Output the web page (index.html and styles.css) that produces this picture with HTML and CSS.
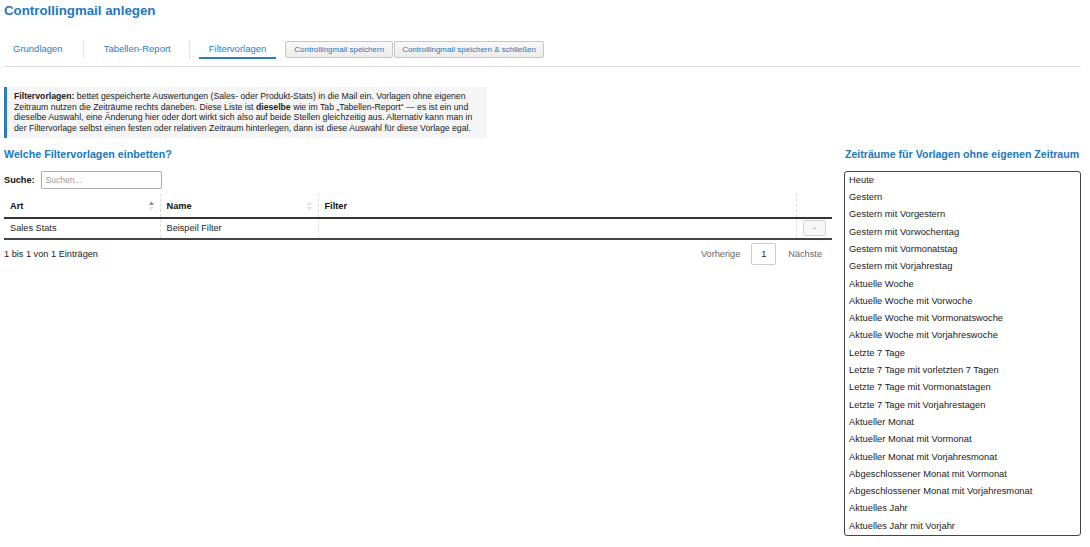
FILE: index.html
```html
<!DOCTYPE html>
<html lang="de">
<head>
<meta charset="utf-8">
<title>Controllingmail anlegen</title>
<link rel="stylesheet" href="styles.css">
</head>
<body>
<div class="page">
  <h1 class="title">Controllingmail anlegen</h1>

  <div class="tabbar">
    <a class="tab">Grundlagen</a>
    <span class="tabsep"></span>
    <a class="tab">Tabellen-Report</a>
    <span class="tabsep"></span>
    <a class="tab active">Filtervorlagen</a>
    <div class="actions">
      <button class="btn">Controllingmail speichern</button>
      <button class="btn">Controllingmail speichern &amp; schließen</button>
    </div>
  </div>
  <div class="rule"></div>

  <div class="info">
    <b>Filtervorlagen:</b> bettet gespeicherte Auswertungen (Sales- oder Produkt-Stats) in die Mail ein. Vorlagen ohne eigenen<br>
    Zeitraum nutzen die Zeiträume rechts daneben. Diese Liste ist <b>dieselbe</b> wie im Tab „Tabellen-Report“ — es ist ein und<br>
    dieselbe Auswahl, eine Änderung hier oder dort wirkt sich also auf beide Stellen gleichzeitig aus. Alternativ kann man in<br>
    der Filtervorlage selbst einen festen oder relativen Zeitraum hinterlegen, dann ist diese Auswahl für diese Vorlage egal.
  </div>

  <div class="columns">
    <section class="left">
      <h2 class="heading">Welche Filtervorlagen einbetten?</h2>
      <div class="search">
        <label>Suche:</label>
        <input type="text" placeholder="Suchen...">
      </div>
      <table class="grid">
        <thead>
          <tr>
            <th class="c-art">Art<svg class="sort" width="5" height="10" viewBox="0 0 5 10"><path d="M2.5 0.5 L5 4 L0 4 Z" fill="#8a8a8a"/><path d="M2.5 9.5 L5 6 L0 6 Z" fill="#e0e0e0"/></svg></th>
            <th class="c-name">Name<svg class="sort" width="5" height="10" viewBox="0 0 5 10"><path d="M2.5 0.5 L5 4 L0 4 Z" fill="#e0e0e0"/><path d="M2.5 9.5 L5 6 L0 6 Z" fill="#e0e0e0"/></svg></th>
            <th class="c-filter">Filter</th>
            <th class="c-act"></th>
          </tr>
        </thead>
        <tbody>
          <tr>
            <td>Sales Stats</td>
            <td>Beispeil Filter</td>
            <td></td>
            <td class="c-act"><span class="mini">+</span></td>
          </tr>
        </tbody>
      </table>
      <div class="tfoot">
        <span>1 bis 1 von 1 Einträgen</span>
        <div class="pager">
          <span class="pl">Vorherige</span>
          <span class="pnum">1</span>
          <span class="pl">Nächste</span>
        </div>
      </div>
    </section>

    <aside class="right">
      <h2 class="heading">Zeiträume für Vorlagen ohne eigenen Zeitraum</h2>
      <div class="listbox">
        <div class="opt">Heute</div>
        <div class="opt">Gestern</div>
        <div class="opt">Gestern mit Vorgestern</div>
        <div class="opt">Gestern mit Vorwochentag</div>
        <div class="opt">Gestern mit Vormonatstag</div>
        <div class="opt">Gestern mit Vorjahrestag</div>
        <div class="opt">Aktuelle Woche</div>
        <div class="opt">Aktuelle Woche mit Vorwoche</div>
        <div class="opt">Aktuelle Woche mit Vormonatswoche</div>
        <div class="opt">Aktuelle Woche mit Vorjahreswoche</div>
        <div class="opt">Letzte 7 Tage</div>
        <div class="opt">Letzte 7 Tage mit vorletzten 7 Tagen</div>
        <div class="opt">Letzte 7 Tage mit Vormonatstagen</div>
        <div class="opt">Letzte 7 Tage mit Vorjahrestagen</div>
        <div class="opt">Aktueller Monat</div>
        <div class="opt">Aktueller Monat mit Vormonat</div>
        <div class="opt">Aktueller Monat mit Vorjahresmonat</div>
        <div class="opt">Abgeschlossener Monat mit Vormonat</div>
        <div class="opt">Abgeschlossener Monat mit Vorjahresmonat</div>
        <div class="opt">Aktuelles Jahr</div>
        <div class="opt">Aktuelles Jahr mit Vorjahr</div>
      </div>
    </aside>
  </div>
</div>
</body>
</html>
```

FILE: styles.css
```css
* { box-sizing: border-box; }
html, body { margin: 0; padding: 0; background: #fff; }
body {
  font-family: "Liberation Sans", Arial, sans-serif;
  color: #222;
  font-size: 9.2px;
}
.page { padding: 0 9px 0 4px; }

.title {
  margin: 0;
  font-size: 13.3px;
  line-height: 21px;
  font-weight: bold;
  color: #2079bd;
}

.tabbar {
  display: flex;
  align-items: flex-start;
  margin-top: 19px;
  height: 19px;
}
.tab {
  display: block;
  height: 19px;
  padding: 0 10px;
  line-height: 17px;
  font-size: 9.5px;
  color: #2e7cc0;
  border-bottom: 2px solid transparent;
}
.tab:first-child { margin-left: -1px; }
.tab.active { border-bottom-color: #2e7cc0; }
.tabsep {
  display: block;
  width: 1px;
  height: 19px;
  background: #e2e2e2;
  margin: 0 10px 0 10px;
}
.tabsep:nth-of-type(2) { margin: 0 9px 0 8px; }
.actions { display: flex; margin-left: 9px; margin-top: 1px; }
.btn {
  font-family: inherit;
  font-size: 8px;
  height: 17px;
  padding: 0 8px;
  color: #2e72b0;
  background: linear-gradient(#f8f8f8, #ececec);
  border: 1px solid #c6c6c6;
  border-radius: 2px;
  margin: 0;
}
.btn + .btn { padding: 0 7px; margin-left: 1px; }

.rule { height: 1px; background: #dcdcdc; margin-top: 7px; }

.info {
  margin-top: 20px;
  width: 483px;
  background: #f5f5f5;
  border-left: 3px solid #2e7cc0;
  padding: 4px 6px 4px 7px;
  font-size: 8.7px;
  line-height: 10.7px;
  color: #222;
  white-space: nowrap;
}

.columns { display: flex; margin-top: 8px; gap: 13px; }
.left { flex: 1; min-width: 0; }
.right { width: 237px; flex: none; }

.heading {
  margin: 0;
  font-size: 10.7px;
  line-height: 16px;
  font-weight: bold;
  color: #2079bd;
  white-space: nowrap;
}
.right .heading { font-size: 10.6px; margin-left: 1px; }

.search { display: flex; align-items: center; margin-top: 9px; height: 18px; }
.search label { font-weight: bold; font-size: 9.2px; color: #111; margin-right: 6px; }
.search input {
  width: 121px; height: 18px;
  border: 1px solid #aaa;
  border-radius: 2px;
  padding: 0 4px;
  font-family: inherit;
  font-size: 8.5px;
}
.search input::placeholder { color: #999; }

.grid {
  margin-top: 5px;
  width: 828px;
  border-collapse: collapse;
  font-size: 9.2px;
}
.grid th {
  height: 24px;
  text-align: left;
  font-weight: bold;
  color: #111;
  padding: 1px 6px 0;
  border-bottom: 2px solid #333;
  border-right: 1px dashed #ddd;
  position: relative;
}
.grid td {
  height: 21px;
  padding: 0 6px;
  color: #222;
  border-bottom: 2px solid #444;
  border-right: 1px dashed #ddd;
}
.grid th:last-child, .grid td:last-child { border-right: none; }
.c-art { width: 156px; }
.c-name { width: 158px; }
.c-filter { width: 478px; }
.c-act { width: 36px; text-align: center; }
.sort { position: absolute; right: 6px; top: 7px; }
.mini {
  display: inline-block;
  width: 23px; height: 16px;
  border: 1px solid #d5d5d5;
  border-radius: 2px;
  background: #f7f7f7;
  color: #9aa8b8;
  font-size: 6px;
  line-height: 14px;
  text-align: center;
}

.tfoot {
  width: 828px;
  display: flex;
  justify-content: space-between;
  align-items: center;
  margin-top: 3px;
  height: 22px;
  color: #222;
}
.pager { display: flex; align-items: center; margin-right: 10px; }
.pl { color: #666; }
.pnum {
  width: 25px; height: 22px;
  border: 1px solid #ccc;
  border-radius: 2px;
  text-align: center;
  line-height: 20px;
  margin: 0 12px 0 11px;
  color: #222;
}

.listbox {
  margin-top: 9px;
  border: 1px solid #444;
  border-radius: 3px;
}
.opt {
  height: 17.3px;
  line-height: 16.5px;
  padding-left: 4px;
  font-size: 9.35px;
  color: #222;
  white-space: nowrap;
}
```
